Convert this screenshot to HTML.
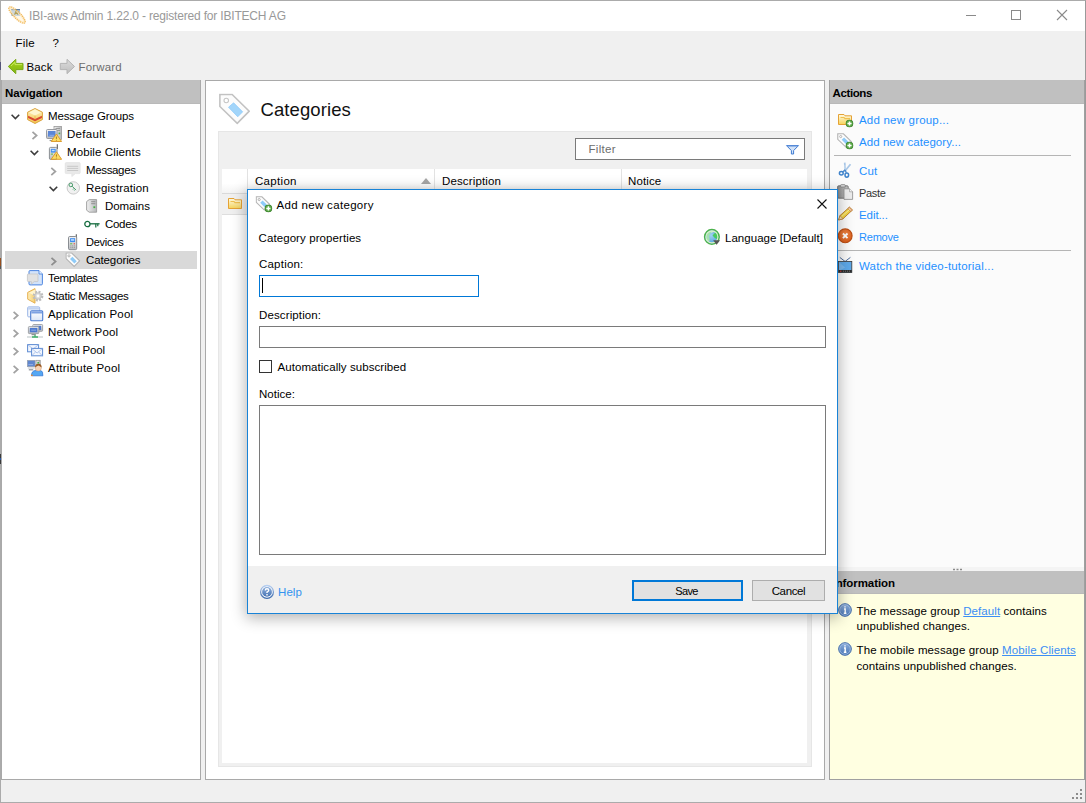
<!DOCTYPE html>
<html lang="en">
<head>
<meta charset="utf-8">
<title>IBI-aws Admin 1.22.0 - registered for IBITECH AG</title>
<style>
*{box-sizing:border-box;margin:0;padding:0}
html,body{width:1086px;height:803px;overflow:hidden}
body{position:relative;background:#f0f0f0;font-family:"Liberation Sans",sans-serif;font-size:11.5px;color:#000;line-height:16px}
.a{position:absolute}
.t{position:absolute;white-space:nowrap;line-height:16px;height:16px}
.b{font-weight:bold}
.ul{color:#3c8ef5;text-decoration:underline}
svg{position:absolute;overflow:visible}
/* window */
#win{left:0;top:0;width:1086px;height:803px;border:1px solid #ababab;border-right-color:#9a9a9a}
#titlebar{left:1px;top:1px;width:1084px;height:30px;background:#fff}
/* panels */
.hdr{background:#c0c0c0;height:24px;border-bottom:1px solid #b9b9b9}
#nav{left:1px;top:80px;width:200px;height:700px;background:#fff;border:1px solid #a9a9a9;border-top:none}
#center{left:205px;top:80px;width:620px;height:700px;background:#fff;border:1px solid #a9a9a9}
#act{left:829px;top:80px;width:256px;height:491px;background:#fbfbfb;border-left:1px solid #a0a0a0;border-right:1px solid #a0a0a0}
#info{left:829px;top:571px;width:256px;height:209px;background:#ffffe1;border-left:1px solid #a0a0a0;border-right:1px solid #a0a0a0;border-bottom:1px solid #a0a0a0}
#sel{left:5px;top:251px;width:192px;height:18px;background:#d9d9d9}
#frame{left:218px;top:131px;width:594px;height:636px;background:#f0f0f0;border:1px solid #e6e6e6}
#table{left:222px;top:169px;width:585px;height:594px;background:#fff}
#filter{left:575px;top:138px;width:230px;height:22px;background:#fff;border:1px solid #7a7a7a}
/* dialog */
#dlg{left:247px;top:189px;width:591px;height:425px;background:#fff;border:1px solid #1883d7;box-shadow:0 3px 14px 1px rgba(0,0,0,.30)}
#dfoot{left:248px;top:566px;width:589px;height:47px;background:#f0f0f0}
.inp{background:#fff;border:1px solid #7a7a7a}
input,textarea,button{appearance:none;-webkit-appearance:none;outline:none;border-radius:0;margin:0;font-family:"Liberation Sans",sans-serif;color:#000;resize:none;display:block}
.btn{background:#e1e1e1;border:1px solid #adadad;line-height:16px;text-align:center}
</style>
</head>
<body>
<div class="a" id="titlebar"></div>


<!-- NAV -->
<div class="a" id="nav"></div>
<div class="a hdr" style="left:2px;top:80px;width:198px"></div>
<div class="a" id="sel"></div>

<!-- CENTER -->
<div class="a" id="center"></div>
<div class="a" id="frame"></div>
<div class="a" id="table"></div>
<div class="a" id="filter"></div>
<div class="a" id="thead" style="left:222px;top:169px;width:585px;height:25px;background:linear-gradient(#fff 0,#fff 60%,#f3f3f3 100%);border-bottom:1px solid #d9d9d9"></div>
<div class="a" style="left:247px;top:169px;width:1px;height:24px;background:#e2e2e2"></div>
<div class="a" style="left:434px;top:169px;width:1px;height:24px;background:#e2e2e2"></div>
<div class="a" style="left:621px;top:169px;width:1px;height:24px;background:#e2e2e2"></div>
<div class="a" id="row1" style="left:222px;top:194px;width:585px;height:21px;background:#f0f0f0;border-bottom:1px solid #dedede"></div>
<svg style="left:421px;top:178px" width="10" height="6" viewBox="0 0 10 6"><path d="M0 6 L5 0 L10 6 Z" fill="#a6a6a6"/></svg>

<!-- ACTIONS -->
<div class="a" id="act"></div>
<div class="a hdr" style="left:830px;top:80px;width:254px"></div>
<div class="a" style="left:830px;top:567px;width:254px;height:4px;background:#f4f4f4"></div>
<div class="a" style="left:834px;top:155px;width:237px;height:1px;background:#b5b5b5"></div>
<div class="a" style="left:834px;top:250px;width:237px;height:1px;background:#b5b5b5"></div>

<!-- INFO -->
<div class="a" id="info"></div>
<div class="a hdr" style="left:830px;top:571px;width:254px;height:23px"></div>

<svg width="0" height="0" style="left:0;top:0">
<defs>
<linearGradient id="gGold" x1="0" y1="0" x2="0" y2="1"><stop offset="0" stop-color="#fff3c4"/><stop offset="1" stop-color="#f3c64e"/></linearGradient>
<linearGradient id="gGold2" x1="0" y1="0" x2="1" y2="0"><stop offset="0" stop-color="#fdeebc"/><stop offset="1" stop-color="#f6cf6e"/></linearGradient>
<linearGradient id="gFold" x1="0" y1="0" x2="0" y2="1"><stop offset="0" stop-color="#fffbe6"/><stop offset="1" stop-color="#f5d45a"/></linearGradient>
<linearGradient id="gMon" x1="0" y1="0" x2="0" y2="1"><stop offset="0" stop-color="#f4f4f4"/><stop offset="1" stop-color="#b9bcc0"/></linearGradient>
<linearGradient id="gBlue" x1="0" y1="0" x2="0" y2="1"><stop offset="0" stop-color="#7fa4dc"/><stop offset="1" stop-color="#3f6fbe"/></linearGradient>
<linearGradient id="gInfo" x1="0" y1="0" x2="0" y2="1"><stop offset="0" stop-color="#8fb0dc"/><stop offset="1" stop-color="#4673b4"/></linearGradient>
<linearGradient id="gGrn" x1="0" y1="0" x2="0" y2="1"><stop offset="0" stop-color="#a9d417"/><stop offset="1" stop-color="#7fb414"/></linearGradient>
<linearGradient id="gGry" x1="0" y1="0" x2="0" y2="1"><stop offset="0" stop-color="#dcdcdc"/><stop offset="1" stop-color="#bdbdbd"/></linearGradient>
<linearGradient id="gWin" x1="0" y1="0" x2="0" y2="1"><stop offset="0" stop-color="#ffffff"/><stop offset="1" stop-color="#dbe6f7"/></linearGradient>
<linearGradient id="gSrv" x1="0" y1="0" x2="1" y2="0"><stop offset="0" stop-color="#f2f2f2"/><stop offset="1" stop-color="#b4b6b8"/></linearGradient>
<linearGradient id="gClip" x1="0" y1="0" x2="1" y2="0"><stop offset="0" stop-color="#8a8a8a"/><stop offset="1" stop-color="#c4c4c4"/></linearGradient>
<linearGradient id="gRing" x1="0" y1="0" x2="0" y2="1"><stop offset="0" stop-color="#b6cef0"/><stop offset="1" stop-color="#3b6aac"/></linearGradient>
<radialGradient id="gGlobe" cx=".45" cy=".4" r=".65"><stop offset="0" stop-color="#9fd2f0"/><stop offset="1" stop-color="#4b9bdc"/></radialGradient>
<radialGradient id="gRem" cx=".5" cy=".4" r=".6"><stop offset="0" stop-color="#f08a4a"/><stop offset="1" stop-color="#d85a18"/></radialGradient>
<symbol id="tag" viewBox="0 0 32 32"><path d="M1.2 1.2H13.7L31.1 18.2L18.9 30.6L1.2 13.4Z" fill="#fcfcfc" stroke="#c2c2c2" stroke-width="1.6" stroke-linejoin="miter"/><circle cx="7.7" cy="7.4" r="2.3" fill="#fff" stroke="#c6c6c6" stroke-width="1.1"/><path d="M15.2 9.7L24.4 18.9L19.4 23.9L10 14.2Z" fill="#a2d5fa" stroke="#8fcbf8" stroke-width=".8"/></symbol>
<symbol id="tag16" viewBox="0 0 32 32"><path d="M1.6 1.6H13.7L30.6 18.2L18.9 30L1.6 13.4Z" fill="#fcfcfc" stroke="#b4b4b4" stroke-width="2.4"/><circle cx="7.9" cy="7.6" r="2.3" fill="#fff" stroke="#ababab" stroke-width="1.9"/><path d="M15.2 9.7L24.4 18.9L19.4 23.9L10 14.2Z" fill="#8ecbf8"/></symbol>
<symbol id="plus" viewBox="0 0 8 8"><circle cx="4" cy="4" r="3.6" fill="#5aa946" stroke="#3a7d2c" stroke-width=".8"/><path d="M4 1.9V6.1M1.9 4H6.1" stroke="#fff" stroke-width="1.5"/></symbol>
<symbol id="warn" viewBox="0 0 12 9"><path d="M6 .6L11.4 8.4H.6Z" fill="#fcdc62" stroke="#dc9a2c" stroke-width="1" stroke-linejoin="round"/><path d="M6 3.3V5.7M6 6.7V7.5" stroke="#9a6a1c" stroke-width=".9"/></symbol>
<symbol id="folder" viewBox="0 0 14 11"><path d="M.5 .5H6L7 1.8H13.5V10.5H.5Z" fill="url(#gFold)" stroke="#e5a236" stroke-width="1" stroke-linejoin="round"/><path d="M2.5 3.5H6L7 4.6H12" stroke="#f0c050" stroke-width="1.2" fill="none"/></symbol>
<symbol id="infoi" viewBox="0 0 14 14"><circle cx="7" cy="7" r="6.3" fill="url(#gInfo)" stroke="#3f69a8" stroke-width="1"/><circle cx="7" cy="7" r="5.3" fill="none" stroke="#a9c3e6" stroke-width=".7"/><path d="M7 3.2V4.6M6 6H7.2V10M5.8 10.2H8.4" stroke="#fff" stroke-width="1.4" fill="none"/></symbol>
<symbol id="chevR" viewBox="0 0 7 10"><path d="M1 1L5.5 5L1 9" fill="none" stroke="#a6a6a6" stroke-width="1.5"/></symbol>
<symbol id="chevD" viewBox="0 0 10 7"><path d="M1 1L5 5.2L9 1" fill="none" stroke="#404040" stroke-width="1.7"/></symbol>
</defs>
</svg>

<!-- title icon -->
<svg style="left:8px;top:6px" width="18" height="18" viewBox="0 0 18 18"><rect x="3.2" y="3" width="8.8" height="7" fill="#a9c9ef"/><rect x="3.2" y="3" width="8.8" height="1.2" fill="#5f7fa6"/><path d="M6.6 8.8L8 4.8L10 8.8M7 7.5H9.2" stroke="#7a6a10" stroke-width="1.1" fill="none"/><ellipse cx="9" cy="9" rx="11" ry="3.3" transform="rotate(45 9 9)" fill="rgba(255,238,200,.45)" stroke="#f0b24a" stroke-width="1.5" stroke-dasharray="1.3 .7" opacity=".9"/><ellipse cx="9" cy="9" rx="10" ry="2.2" transform="rotate(45 9 9)" fill="none" stroke="#fde2a8" stroke-width=".8" opacity=".8"/></svg>
<!-- window controls -->
<svg style="left:960px;top:5px" width="120" height="22" viewBox="960 5 120 22"><path d="M966 15.5H976" stroke="#8a8a8a" stroke-width="1"/><rect x="1011.5" y="10.5" width="9" height="9" fill="none" stroke="#8a8a8a" stroke-width="1"/><path d="M1057 10L1067 20M1067 10L1057 20" stroke="#8a8a8a" stroke-width="1.1"/></svg>
<!-- toolbar arrows -->
<svg style="left:6px;top:57px" width="72" height="20" viewBox="6 57 72 20"><path d="M8.3 66.5L15.8 59.3V63.4H23V69.6H15.8V73.7Z" fill="url(#gGrn)" stroke="#79a916" stroke-width="1" stroke-linejoin="round"/><path d="M11 66L15 62.2V64.6H22" stroke="#c6e85a" stroke-width="1" fill="none"/><path d="M74.5 66.5L67 59.3V63.4H60.3V69.6H67V73.7Z" fill="url(#gGry)" stroke="#b4b4b4" stroke-width="1" stroke-linejoin="round"/></svg>
<svg style="left:0;top:0" width="1086" height="803" viewBox="0 0 1086 803">
<path d="M11.6 114.8l3.8 3.8l3.8-3.8" fill="none" stroke="#3d3d3d" stroke-width="1.6"/>
<path d="M30.6 150.8l3.8 3.8l3.8-3.8" fill="none" stroke="#3d3d3d" stroke-width="1.6"/>
<path d="M49.6 186.8l3.8 3.8l3.8-3.8" fill="none" stroke="#3d3d3d" stroke-width="1.6"/>
<path d="M32.5 131.9l4.1 3.6l-4.1 3.6" fill="none" stroke="#a2a2a2" stroke-width="1.75"/>
<path d="M51.3 167.9l4.1 3.6l-4.1 3.6" fill="none" stroke="#a2a2a2" stroke-width="1.75"/>
<path d="M51.5 257.9l4.1 3.6l-4.1 3.6" fill="none" stroke="#8e8e8e" stroke-width="1.75"/>
<path d="M13.6 311.9l4.1 3.6l-4.1 3.6" fill="none" stroke="#a2a2a2" stroke-width="1.75"/>
<path d="M13.6 329.9l4.1 3.6l-4.1 3.6" fill="none" stroke="#a2a2a2" stroke-width="1.75"/>
<path d="M13.6 347.9l4.1 3.6l-4.1 3.6" fill="none" stroke="#a2a2a2" stroke-width="1.75"/>
<path d="M13.6 365.9l4.1 3.6l-4.1 3.6" fill="none" stroke="#a2a2a2" stroke-width="1.75"/>
<g transform="translate(27 108)"><path d="M8 .5L15.4 4.2V11.6L8 15.5L.6 11.6V4.2Z" fill="url(#gGold)" stroke="#dba33c" stroke-width="1" stroke-linejoin="round"/><path d="M1.1 7.7L8 11L14.9 7.7V9.9L8 13.3L1.1 9.9Z" fill="#d8472f"/><path d="M8 1.4L14 4.4L8 7.4L2 4.4Z" fill="#fff6cf"/><path d="M8 7.6V11.4" stroke="#e8b24a" stroke-width=".8"/></g>
<g transform="translate(46 126)"><rect x="8" y=".5" width="7.5" height="13" fill="url(#gSrv)" stroke="#9a9a9a" stroke-width=".8"/><path d="M9.5 2.5H14M9.5 4.5H14" stroke="#8c8c8c" stroke-width=".8"/><rect x="12.6" y="6.6" width="1.6" height="1.6" fill="#46b046"/><rect x=".5" y="3.5" width="10.5" height="9" rx="1" fill="url(#gMon)" stroke="#8e9298" stroke-width=".9"/><rect x="2" y="5" width="7.5" height="5.6" fill="#5b86d6"/><path d="M3.5 9.3H8" stroke="#9ab8ec" stroke-width=".8"/><path d="M3.6 14.5H9" stroke="#8e9298" stroke-width="1.2"/><use href="#warn" x="4.6" y="7.4" width="11.6" height="8.7"/></g>
<g transform="translate(46 144)"><path d="M11.3 .3V5" stroke="#5a5a5a" stroke-width="1.1"/><rect x="3.4" y="3.4" width="7.6" height="12" rx="1.2" fill="url(#gMon)" stroke="#80848a" stroke-width=".9"/><rect x="4.8" y="4.8" width="4.9" height="3.8" fill="#3f8cf0"/><rect x="5.8" y="5.8" width="2.8" height="1.4" fill="#bfe0ff"/><rect x="4.8" y="9.6" width="2.2" height="1" fill="#59b648"/><use href="#warn" x="4.6" y="7.2" width="11.6" height="8.7"/></g>
<g transform="translate(65 162)"><path d="M1.2 .6H14.2Q15.2 .6 15.2 1.6V10.6Q15.2 11.6 14.2 11.6H10.4L6.8 14.6V11.6H1.2Q.2 11.6 .2 10.6V1.6Q.2 .6 1.2 .6Z" fill="#e9e9e9" stroke="#dedede" stroke-width=".6"/><path d="M2.2 4.3H13.2M2.2 6.4H13.2M2.2 8.5H13.2" stroke="#c4c4c4" stroke-width=".9"/></g>
<g transform="translate(66 180)"><circle cx="7.3" cy="7.9" r="6.2" fill="#f1f1f1" stroke="#c3c3c3" stroke-width=".9"/><circle cx="4.8" cy="4.9" r="1.8" fill="none" stroke="#4a9c6c" stroke-width="1"/><path d="M6.1 6.2L10 10.1M8.2 8.3L7 9.5M9.4 9.5L8.4 10.5" stroke="#4a9c6c" stroke-width="1" fill="none"/></g>
<g transform="translate(86 199)"><path d="M3.2 .6H10.6V13.2H3.2L.6 11.2V2.6Z" fill="url(#gSrv)" stroke="#9c9c9c" stroke-width=".9" stroke-linejoin="round"/><path d="M5.2 2.7H9.3M5.2 4.7H9.3" stroke="#8a8a8a" stroke-width=".9"/><rect x="7.4" y="7.3" width="1.8" height="1.8" fill="#43b043"/></g>
<g transform="translate(84 220)" fill="none" stroke="#176d40" stroke-width="1.3"><ellipse cx="3.4" cy="4" rx="2.6" ry="2.7"/><path d="M6 3.8H15.6"/><path d="M11.8 3.8V7.6M13.8 3.8V6.2" stroke-width="1.2"/></g>
<g transform="translate(66 234)"><path d="M10.3 .3V4" stroke="#5a5a5a" stroke-width="1.1"/><rect x="2.5" y="2.5" width="8.2" height="13.2" rx="1.3" fill="url(#gMon)" stroke="#7e8288" stroke-width=".9"/><rect x="4.1" y="4.2" width="5" height="3.9" fill="#3f8cf0"/><rect x="5" y="5.2" width="3.2" height="1.5" fill="#c4e2ff"/><rect x="4.1" y="9.3" width="2.2" height="1" fill="#59b648"/><rect x="7.6" y="9.3" width="1.4" height="1" fill="#e24a3a"/><path d="M4.3 11.9H9M4.3 13.6H9" stroke="#9a9a9a" stroke-width="1" stroke-dasharray="1.1 .7"/></g>
<use href="#tag16" x="65.3" y="252.3" width="15" height="15"/>
<g transform="translate(27 270)"><path d="M3 .6H12L15.4 4V13.8Q15.4 14.9 14.3 14.9H3Q2 14.9 2 13.8V1.6Q2 .6 3 .6Z" fill="#d3e3fa" stroke="#4480de" stroke-width=".95"/><path d="M12 .6V4H15.4" fill="#eef5ff" stroke="#3d7bdc" stroke-width=".8"/><path d="M1.2 4H10.2Q11 4 11 4.8V10.8Q11 11.6 10.2 11.6H7.2L4.4 14.2V11.6H1.2Q.4 11.6 .4 10.8V4.8Q.4 4 1.2 4Z" fill="#e2e2e2" stroke="#c2c2c2" stroke-width=".7"/></g>
<g transform="translate(27 288)"><path d="M8 .6V15.2L.7 11.2V4.4Z" fill="url(#gGold2)" stroke="#e6b050" stroke-width="1" stroke-linejoin="round"/><path d="M8 1.6L2 4.8L8 8" fill="#fff4cc"/><circle cx="11" cy="8" r="4.1" fill="none" stroke="#bdbdbd" stroke-width="2.6" stroke-dasharray="1.9 1.32"/><circle cx="11" cy="8" r="3.3" fill="#d9d9d9" stroke="#b6b6b6" stroke-width=".6"/><circle cx="11" cy="8" r="1.4" fill="#fff"/><path d="M8 .6V15.2" stroke="#fff" stroke-width="0"/></g>
<g transform="translate(27 306)"><rect x=".7" y=".9" width="12" height="10" rx="1" fill="#f3f7fd" stroke="#98b4e6" stroke-width="1"/><rect x="1.2" y="1.4" width="11" height="2.2" fill="#c0d2f2"/><rect x="3.7" y="4.7" width="12" height="10" rx="1" fill="url(#gWin)" stroke="#4d7ed2" stroke-width="1.1"/><rect x="4.3" y="5.3" width="10.8" height="2.2" fill="#7ea2e2"/></g>
<g transform="translate(27 324)"><rect x="5.8" y=".5" width="9.8" height="6.8" rx=".8" fill="url(#gMon)" stroke="#8e9298" stroke-width=".8"/><rect x="7.2" y="1.8" width="7" height="4.2" fill="#4d79cf"/><rect x="1.4" y="2.6" width="10.4" height="7" rx=".8" fill="url(#gMon)" stroke="#8e9298" stroke-width=".8"/><rect x="2.8" y="3.9" width="7.6" height="4.4" fill="#4d79cf"/><path d="M4.2 6.2H9" stroke="#9ab8ec" stroke-width=".8"/><path d="M4.5 10.6H8.8" stroke="#8e9298" stroke-width="1.2"/><path d="M0 13H16" stroke="#c9d1d3" stroke-width="1.3"/><path d="M5 13H11M8 10.8V13" stroke="#3fb06a" stroke-width="1.3"/></g>
<g transform="translate(27 344)" fill="#f3f7fe" stroke="#5c8ad2" stroke-width="1"><rect x=".6" y=".6" width="11" height="7.2"/><path d="M.6 .6L6.1 5L11.6 .6" fill="none" stroke="#9db8e6" stroke-width=".8"/><rect x="4.6" y="4.4" width="11" height="7.4"/><path d="M4.6 4.4L10.1 9L15.6 4.4M4.6 11.8L8.6 8M15.6 11.8L11.6 8" fill="none" stroke="#9db8e6" stroke-width=".8"/></g>
<g transform="translate(27 360)"><rect x="9" y=".3" width="4.2" height="7" fill="url(#gSrv)" stroke="#8c8c8c" stroke-width=".7"/><rect x="10.4" y="2" width="1.6" height="1.6" fill="#46b046"/><rect x=".3" y=".3" width="7.8" height="6.4" fill="#5f86cf" stroke="#9aa0a8" stroke-width=".6"/><path d="M1.4 4.6H6" stroke="#a9c0ec" stroke-width=".7"/><path d="M.8 7.4H7.6V8.6H.8Z" fill="#c9ccd0"/><path d="M1.8 9.8H6.2" stroke="#8e9298" stroke-width="1.2"/><path d="M4.4 15.8Q4.6 11 8 10.6H14Q16 11.2 15.9 15.8Z" fill="#55a8f4" stroke="#2f6fd0" stroke-width=".7"/><circle cx="11.3" cy="7.9" r="3.1" fill="#f6d2b4" stroke="#c99a78" stroke-width=".5"/><path d="M8 7.4Q8.2 3.6 11.4 3.8Q14.8 3.8 14.6 7.4Q12.6 6.2 11.4 5.6Q10 6.4 8 7.4Z" fill="#9a5a22"/><rect x="4.1" y="14.6" width="1.6" height="1.4" fill="#f08a2a"/></g>
<use href="#tag" x="218.7" y="93.3" width="31.4" height="31.4"/>
<path d="M786.5 145.6H798.5L793.6 150.6V154H791.4V150.6Z" fill="#d3e3f8" stroke="#3f7bd2" stroke-width="1" stroke-linejoin="round"/><path d="M787.6 146.4H797.4" stroke="#8eb2e6" stroke-width="1"/>
<use href="#folder" x="228" y="198" width="14" height="11"/>
<use href="#folder" x="838" y="114" width="14" height="11"/><use href="#plus" x="845.5" y="119.5" width="8" height="8"/>
<use href="#tag16" x="837" y="133" width="15" height="15"/><use href="#plus" x="845.5" y="141.5" width="8" height="8"/>
<g fill="none"><path d="M845.4 171.4L844.7 162.6" stroke="#a8c6e6" stroke-width="1.7"/><path d="M844.4 171.8L850.5 164.2" stroke="#a8c6e6" stroke-width="1.7"/><path d="M845.2 169.6L845 165" stroke="#dcebf8" stroke-width=".6"/><path d="M842.6 172L845.2 169.8M846.4 172.8L845 170" stroke="#4a88cc" stroke-width="1.3"/><ellipse cx="841.3" cy="173.3" rx="1.9" ry="1.7" stroke="#3f83cb" stroke-width="1.5"/><ellipse cx="846.8" cy="175.1" rx="1.8" ry="2.1" stroke="#3f83cb" stroke-width="1.5"/></g>
<g><rect x="837.6" y="185.8" width="10.6" height="12.4" rx="1" fill="url(#gClip)" stroke="#6e6e6e" stroke-width=".9"/><path d="M840.6 187V185.4Q840.6 184.6 841.4 184.6H844.4Q845.2 184.6 845.2 185.4V187Z" fill="#d8d8d8" stroke="#7a7a7a" stroke-width=".7"/><path d="M844 188.8H849.6L852.6 191.8V199.4H844Z" fill="#ececec" stroke="#8c8c8c" stroke-width=".8"/><path d="M849.6 188.8V191.8H852.6" fill="#fafafa" stroke="#8c8c8c" stroke-width=".6"/></g>
<g><path d="M838.6 220L840 215.6L849.4 207.2L852.4 210L843 218.8Z" fill="#f2d443" stroke="#b6782c" stroke-width=".9" stroke-linejoin="round"/><path d="M849.4 207.2L852.4 210L850.8 211.5L847.8 208.6Z" fill="#f4c0a8" stroke="#b6782c" stroke-width=".6"/><path d="M838.6 220L840 215.6L843 218.8Z" fill="#f7dfb4" stroke="#b6782c" stroke-width=".6"/><path d="M841.6 216.6L849.6 209.4" stroke="#fbf0a0" stroke-width="1"/></g>
<g><circle cx="845.2" cy="235.8" r="6.9" fill="url(#gRem)" stroke="#bb4d12" stroke-width="1.1"/><path d="M842.9 233.5L847.5 238.1M847.5 233.5L842.9 238.1" stroke="#fff" stroke-width="1.8"/></g>
<g><path d="M845 261.4L839.8 257.4M845.2 261.4L850.4 257.4" stroke="#4a6a9a" stroke-width="1"/><rect x="838.6" y="261.4" width="13.2" height="11" fill="#5ea9ea" stroke="#3a3a3a" stroke-width=".8"/><path d="M839 262L845 267.5L839 271Z" fill="#8cc4f4" opacity=".6"/><rect x="838.6" y="270" width="13.2" height="2.4" fill="#2e2e2e"/><rect x="840" y="270.7" width="1.4" height="1" fill="#e23a3a"/><path d="M843 271.2H851" stroke="#888" stroke-width=".8" stroke-dasharray="1 1"/></g>
<use href="#infoi" x="838" y="603" width="14" height="14"/><use href="#infoi" x="838" y="642" width="14" height="14"/>
<path d="M953 569.5h2M956.5 569.5h2M960 569.5h2" stroke="#8a8a8a" stroke-width="1.6"/>
<rect x="1080" y="789" width="2" height="2" fill="#8c8c8c"/><rect x="1081" y="790" width="2" height="2" fill="#fff" opacity=".0"/><rect x="1076" y="793" width="2" height="2" fill="#8c8c8c"/><rect x="1077" y="794" width="2" height="2" fill="#fff" opacity=".0"/><rect x="1080" y="793" width="2" height="2" fill="#8c8c8c"/><rect x="1081" y="794" width="2" height="2" fill="#fff" opacity=".0"/><rect x="1072" y="797" width="2" height="2" fill="#8c8c8c"/><rect x="1073" y="798" width="2" height="2" fill="#fff" opacity=".0"/><rect x="1076" y="797" width="2" height="2" fill="#8c8c8c"/><rect x="1077" y="798" width="2" height="2" fill="#fff" opacity=".0"/><rect x="1080" y="797" width="2" height="2" fill="#8c8c8c"/><rect x="1081" y="798" width="2" height="2" fill="#fff" opacity=".0"/>
</svg>

<div class="t" id="ttl" style="left:29px;top:8px;letter-spacing:-0.18px;color:#999;font-size:12px">IBI-aws Admin 1.22.0 - registered for IBITECH AG</div>
<div class="t" id="mFile" style="left:15.5px;top:35px;letter-spacing:0.22px;">File</div>
<div class="t" id="mQ" style="left:52.5px;top:35px;letter-spacing:-0.51px;">?</div>
<div class="t" id="tbBack" style="left:26.5px;top:59px;letter-spacing:0.11px;">Back</div>
<div class="t" id="tbFwd" style="left:78.5px;top:59px;letter-spacing:0.15px;color:#6d6d6d">Forward</div>
<div class="t" id="hNav" style="left:5px;top:85px;letter-spacing:-0.13px;font-weight:bold">Navigation</div>
<div class="t" id="hAct" style="left:832.5px;top:85px;letter-spacing:-0.38px;font-weight:bold">Actions</div>
<div class="t" id="hInfo" style="left:832.5px;top:575px;letter-spacing:-0.07px;font-weight:bold">Information</div>
<div class="t" id="n1" style="left:48px;top:108px;letter-spacing:-0.12px;">Message Groups</div>
<div class="t" id="n2" style="left:67px;top:126px;letter-spacing:0.31px;">Default</div>
<div class="t" id="n3" style="left:67px;top:144px;letter-spacing:0.11px;">Mobile Clients</div>
<div class="t" id="n4" style="left:86px;top:162px;letter-spacing:-0.35px;">Messages</div>
<div class="t" id="n5" style="left:86px;top:180px;letter-spacing:0.11px;">Registration</div>
<div class="t" id="n6" style="left:105px;top:198px;letter-spacing:-0.08px;">Domains</div>
<div class="t" id="n7" style="left:105px;top:216px;letter-spacing:-0.31px;">Codes</div>
<div class="t" id="n8" style="left:86px;top:234px;letter-spacing:-0.24px;font-size:11px;">Devices</div>
<div class="t" id="n9" style="left:86px;top:252px;letter-spacing:-0.11px;">Categories</div>
<div class="t" id="n10" style="left:48px;top:270px;letter-spacing:-0.34px;">Templates</div>
<div class="t" id="n11" style="left:48px;top:288px;letter-spacing:-0.25px;">Static Messages</div>
<div class="t" id="n12" style="left:48px;top:306px;letter-spacing:0.17px;">Application Pool</div>
<div class="t" id="n13" style="left:48px;top:324px;letter-spacing:0.15px;">Network Pool</div>
<div class="t" id="n14" style="left:48px;top:342px;letter-spacing:-0.17px;">E-mail Pool</div>
<div class="t" id="n15" style="left:48px;top:360px;letter-spacing:0.24px;">Attribute Pool</div>
<div class="t" id="hCat" style="left:260.5px;top:98px;letter-spacing:0.10px;font-size:18.5px;line-height:24px;height:24px;color:#111">Categories</div>
<div class="t" id="fTxt" style="left:588.5px;top:141px;letter-spacing:0.31px;color:#6d6d6d">Filter</div>
<div class="t" id="cCap" style="left:255px;top:173px;letter-spacing:0.31px;">Caption</div>
<div class="t" id="cDesc" style="left:442px;top:173px;letter-spacing:0.14px;">Description</div>
<div class="t" id="cNot" style="left:628px;top:173px;letter-spacing:0.12px;">Notice</div>
<div class="t" id="a1" style="left:859px;top:112px;letter-spacing:0.20px;color:#1e90ff">Add new group...</div>
<div class="t" id="a2" style="left:859px;top:134px;letter-spacing:0.06px;color:#1e90ff">Add new category...</div>
<div class="t" id="a3" style="left:859px;top:163px;letter-spacing:0.15px;color:#1e90ff">Cut</div>
<div class="t" id="a4" style="left:859px;top:185px;letter-spacing:-0.34px;font-size:11px;color:#333">Paste</div>
<div class="t" id="a5" style="left:859px;top:207px;letter-spacing:-0.08px;color:#1e90ff">Edit...</div>
<div class="t" id="a6" style="left:859px;top:229px;letter-spacing:-0.21px;font-size:11px;color:#1e90ff">Remove</div>
<div class="t" id="a7" style="left:859px;top:258px;letter-spacing:0.19px;color:#1e90ff">Watch the video-tutorial...</div>
<div class="t" id="i1" style="left:856.5px;top:603px;letter-spacing:0.07px;">The message group <span class="ul">Default</span> contains</div>
<div class="t" id="i2" style="left:856.5px;top:618px;letter-spacing:0.08px;">unpublished changes.</div>
<div class="t" id="i3" style="left:856.5px;top:642px;letter-spacing:0.12px;">The mobile message group <span class="ul">Mobile Clients</span></div>
<div class="t" id="i4" style="left:856.5px;top:658px;letter-spacing:0.08px;">contains unpublished changes.</div>

<!-- DIALOG -->
<div class="a" id="dlg"></div>
<div class="a" id="dfoot"></div>
<input type="text" class="a inp" id="iCap" style="left:259px;top:275px;width:220px;height:22px;border-color:#0078d7" aria-label="Caption">
<div class="a" id="caret" style="left:262px;top:278px;width:1px;height:15px;background:#000"></div>
<input type="text" class="a inp" id="iDesc" style="left:259px;top:326px;width:567px;height:22px" aria-label="Description">
<input type="checkbox" class="a" id="chk" style="left:259px;top:360px;width:13px;height:13px;background:#fff;border:1px solid #333" aria-label="Automatically subscribed">
<textarea class="a inp" id="iNot" style="left:259px;top:405px;width:567px;height:150px" aria-label="Notice"></textarea>
<button type="button" class="a btn" id="bSave" style="left:632px;top:580px;width:111px;height:21px;border:2px solid #0078d7;padding:1px 2px 0 0;font-size:11px;letter-spacing:-.69px">Save</button>
<button type="button" class="a btn" id="bCancel" style="left:752px;top:580px;width:73px;height:21px;padding:2px 0 1px 0;font-size:11.5px;letter-spacing:-.36px">Cancel</button>

<svg style="left:0;top:0" width="1086" height="803" viewBox="0 0 1086 803">
<use href="#tag16" x="255.5" y="196" width="15" height="15"/><use href="#plus" x="264.4" y="204.4" width="8" height="8"/>
<path d="M817.5 199.5L826.5 208.5M826.5 199.5L817.5 208.5" stroke="#111" stroke-width="1.1"/>
<g><circle cx="711.9" cy="236.9" r="7.3" fill="url(#gGlobe)" stroke="#4db24d" stroke-width="1.5"/><path d="M706.4 235Q707.2 231.8 710.6 231Q711.6 232.6 709.8 234.4Q708.6 236 709.6 238.6Q709.8 241 708.8 242Q706 239.8 706.4 235Z" fill="#a4e2b0"/><path d="M712.6 235.4Q714.2 232.2 717.2 233Q718.8 236 717.6 239.2Q714.6 238.8 712.6 235.4Z" fill="#48ca62"/><path d="M710.4 231.4Q712.6 230.6 714.6 231.6Q712.8 232.6 711.4 233Z" fill="#c6ecd0"/><circle cx="711.9" cy="236.9" r="6" fill="none" stroke="#dcf2c8" stroke-width="1.1"/><path d="M713.2 240.3H720.1L716.6 244.8Z" fill="#555"/></g>
<g><circle cx="267" cy="591.9" r="6.4" fill="#fff" stroke="url(#gRing)" stroke-width="1.3"/><circle cx="267" cy="591.9" r="4.9" fill="url(#gInfo)"/><path d="M265.3 590.4Q265.3 588.8 267 588.8Q268.7 588.8 268.7 590.2Q268.7 591.2 267 592.2V593" fill="none" stroke="#fff" stroke-width="1.4"/><path d="M267 594V595.4" stroke="#fff" stroke-width="1.4"/></g>
</svg>

<div class="t" id="dTtl" style="left:276.5px;top:197px;letter-spacing:0.33px;">Add new category</div>
<div class="t" id="dProp" style="left:258.5px;top:230px;letter-spacing:0.09px;">Category properties</div>
<div class="t" id="dLang" style="left:725px;top:230px;letter-spacing:0.04px;">Language [Default]</div>
<div class="t" id="dCap" style="left:259px;top:256px;letter-spacing:0.21px;">Caption:</div>
<div class="t" id="dDesc" style="left:259px;top:307px;letter-spacing:0.12px;">Description:</div>
<div class="t" id="dAuto" style="left:277.5px;top:359px;letter-spacing:0.06px;">Automatically subscribed</div>
<div class="t" id="dNot" style="left:259px;top:386px;letter-spacing:0.02px;">Notice:</div>
<div class="t" id="dHelp" style="left:278px;top:584px;letter-spacing:0.08px;color:#3393ef">Help</div>

<div class="a" id="win"></div>
<div class="a" style="left:0;top:62px;width:1px;height:8px;background:#55557a"></div>
<div class="a" style="left:0;top:258px;width:1px;height:8px;background:#98501f"></div>
<div class="a" style="left:0;top:266px;width:1px;height:3px;background:#555"></div>
<div class="a" style="left:0;top:454px;width:1px;height:10px;background:#3a3a3a"></div>
<div class="a" style="left:0;top:458px;width:1px;height:2px;background:#2858a8"></div>
</body>
</html>
